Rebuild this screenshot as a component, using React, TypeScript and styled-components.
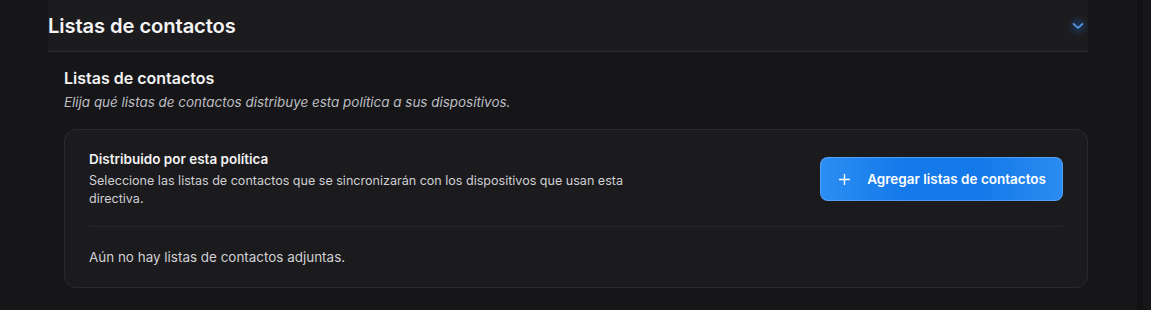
import React from "react";
import styled, { createGlobalStyle } from "styled-components";

const Global = createGlobalStyle`
  html, body { margin: 0; padding: 0; background: #161618; }
  body { font-family: Inter, "Noto Sans", sans-serif; -webkit-font-smoothing: antialiased; }
  * { box-sizing: border-box; }
`;

const Page = styled.div`
  display: flex;
  width: 1151px;
  height: 310px;
  overflow: hidden;
  background: #161618;
`;

const Content = styled.div`
  flex: 1;
  padding-left: 48px;
`;

const Gutter = styled.div`
  width: 6px;
  background: #111113;
`;

const Tail = styled.div`
  width: 8px;
  background: #171719;
`;

const Section = styled.section`
  width: 1040px;
`;

const Header = styled.header`
  height: 52px;
  display: flex;
  align-items: center;
  justify-content: space-between;
  background: #1c1c1e;
  border-bottom: 1px solid #2a2a2d;
`;

const HeaderTitle = styled.h2`
  margin: 0;
  font-size: 20.2px;
  font-weight: 600;
  color: #f4f4f5;
  letter-spacing: -0.1px;
`;

const Chevron = styled.span`
  width: 20px;
  height: 20px;
  border-radius: 50%;
  display: flex;
  align-items: center;
  justify-content: center;
  background: radial-gradient(circle, rgba(30, 70, 130, 0.6) 0%, rgba(30, 70, 130, 0) 75%);
`;

const Body = styled.div`
  padding: 16px 0 0 16px;
`;

const SubTitle = styled.h3`
  margin: 0;
  font-size: 16px;
  line-height: 20px;
  font-weight: 600;
  color: #f2f2f3;
`;

const Italic = styled.p`
  margin: 5px 0 0;
  font-size: 13.45px;
  line-height: 18px;
  font-style: italic;
  color: #bdbdc2;
`;

const Card = styled.div`
  margin-top: 18px;
  border: 1px solid #2b2b2e;
  border-radius: 12px;
  background: #1b1b1d;
  padding: 20px 24px 0;
`;

const TopRow = styled.div`
  display: flex;
  align-items: center;
  justify-content: space-between;
  padding-bottom: 18px;
  border-bottom: 1px solid #262629;
`;

const TextCol = styled.div`
  max-width: 590px;
`;

const CardTitle = styled.div`
  font-size: 13.5px;
  line-height: 18px;
  font-weight: 600;
  color: #f2f2f3;
`;

const CardDesc = styled.div`
  margin-top: 4px;
  font-size: 12.55px;
  line-height: 18px;
  color: #cfcfd3;
`;

const AddButton = styled.button`
  display: flex;
  align-items: center;
  gap: 17px;
  height: 44px;
  padding: 0 16px 0 18px;
  border-radius: 8px;
  border: 1px solid rgba(120, 180, 255, 0.55);
  background: linear-gradient(90deg, #2b8ef3 0%, #1479e9 35%, #1479e9 65%, #2a8cf1 100%);
  color: #ffffff;
  font-family: inherit;
  font-size: 13.5px;
  font-weight: 600;
  cursor: pointer;
`;

const Empty = styled.div`
  padding: 21px 0 21px;
  font-size: 13.45px;
  line-height: 18px;
  color: #d0d0d4;
`;

export default function App() {
  return (
    <>
      <Global />
      <Page>
        <Content>
          <Section>
            <Header>
              <HeaderTitle>Listas de contactos</HeaderTitle>
              <Chevron>
                <svg width="12" height="8" viewBox="0 0 12 8" fill="none">
                  <path d="M1.5 1.8 L6 6 L10.5 1.8" stroke="#5a9deb" strokeWidth="1.7" strokeLinecap="round" strokeLinejoin="round" />
                </svg>
              </Chevron>
            </Header>
            <Body>
              <SubTitle>Listas de contactos</SubTitle>
              <Italic>Elija qué listas de contactos distribuye esta política a sus dispositivos.</Italic>
              <Card>
                <TopRow>
                  <TextCol>
                    <CardTitle>Distribuido por esta política</CardTitle>
                    <CardDesc>
                      Seleccione las listas de contactos que se sincronizarán con los dispositivos que usan esta directiva.
                    </CardDesc>
                  </TextCol>
                  <AddButton>
                    <svg width="11" height="11" viewBox="0 0 11 11" fill="none">
                      <path d="M5.5 0.5 V10.5 M0.5 5.5 H10.5" stroke="#fff" strokeWidth="1.4" strokeLinecap="round" />
                    </svg>
                    Agregar listas de contactos
                  </AddButton>
                </TopRow>
                <Empty>Aún no hay listas de contactos adjuntas.</Empty>
              </Card>
            </Body>
          </Section>
        </Content>
        <Gutter />
        <Tail />
      </Page>
    </>
  );
}
